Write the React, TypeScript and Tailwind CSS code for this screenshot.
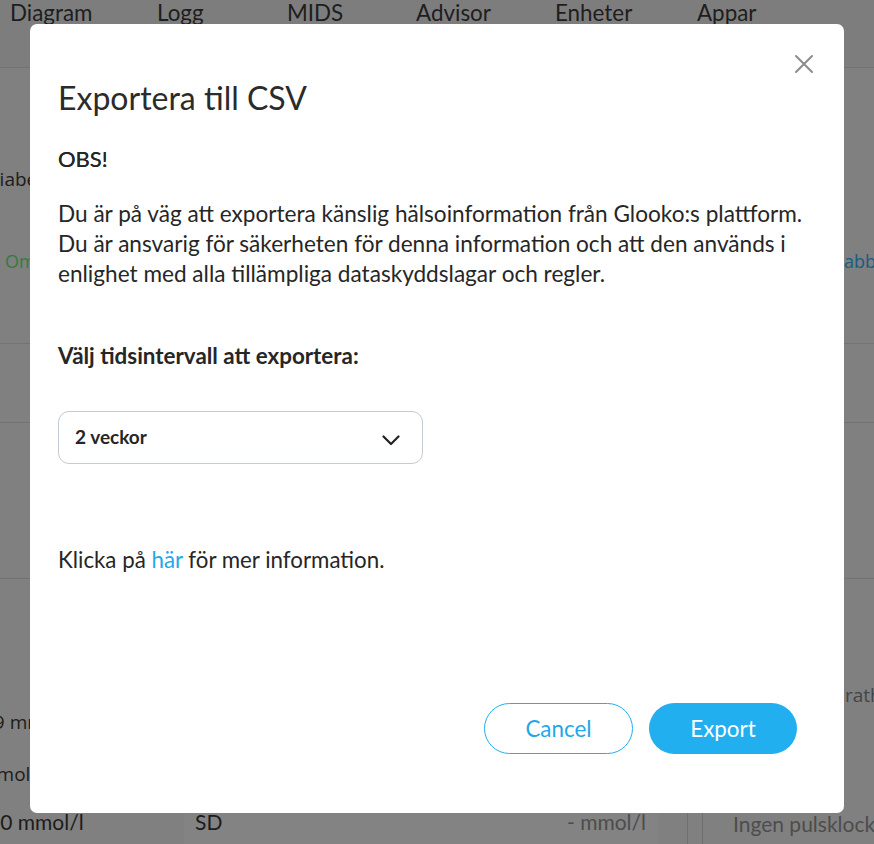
import React from "react";

function Chevron() {
  return (
    <svg width="18" height="11" viewBox="0 0 18 11" fill="none">
      <path d="M1.5 1.5 L9 9 L16.5 1.5" stroke="#222" strokeWidth="2.2" strokeLinecap="round" strokeLinejoin="round" />
    </svg>
  );
}

function CloseIcon() {
  return (
    <svg width="20" height="20" viewBox="0 0 20 20" fill="none">
      <path d="M2 2 L18 18 M18 2 L2 18" stroke="#8c8c8c" strokeWidth="2" strokeLinecap="round" />
    </svg>
  );
}

export default function App() {
  const lato = { fontFamily: "Lato, 'Open Sans', sans-serif" } as React.CSSProperties;
  return (
    <div className="relative w-[874px] h-[844px] overflow-hidden bg-[#808080]" style={{ fontFamily: "'Open Sans', sans-serif" }}>
      {/* background page (dimmed) */}
      <div className="flex flex-col">
        <div className="h-[68px] border-b border-[#737373] bg-[#7d7d7d] flex text-[22.4px] text-[#1e1e1e] leading-none pt-[2px]" style={lato}>
          <div className="w-[157px] pl-[10px]">Diagram</div>
          <div className="w-[130px]">Logg</div>
          <div className="w-[129px]">MIDS</div>
          <div className="w-[139px]">Advisor</div>
          <div className="w-[142px]">Enheter</div>
          <div>Appar</div>
        </div>
        <div className="h-[276px] border-b border-[#737373] flex flex-col">
          <div className="mt-[98px] text-[19px] text-[#1c1c1c] leading-[26px] -ml-[12px]">diabetes</div>
          <div className="mt-[56px] flex justify-between text-[18px] leading-[26px]">
            <span className="pl-[5px] text-[#2f7d3f]">Om</span>
            <span className="text-[#1a5b82] w-[30px] overflow-hidden whitespace-nowrap">abbo</span>
          </div>
        </div>
        <div className="h-[79px] border-b border-[#737373] flex items-center pl-[30px] text-[#2a2a2a] text-[14px]">
          <span className="mt-[6px]">.</span>
        </div>
        <div className="h-[156px] border-b border-[#737373]"></div>
        <div className="h-[265px] flex flex-col text-[19px] text-[#1c1c1c] leading-[26px]">
          <div className="flex justify-end mt-[103px] text-[#454545]">
            <span className="w-[29px] overflow-hidden whitespace-nowrap">rath</span>
          </div>
          <div className="-ml-[17px] mt-[1px]">29 mmol/l</div>
          <div className="-ml-[21px] mt-[26px]">mmol/l</div>
          <div className="flex mt-[21px] items-stretch h-[40px]" style={lato}>
            <div className="w-[196px] shrink-0 -ml-[12px] pt-[1px] text-[21px]">10 mmol/l</div>
            <div className="w-[474px] shrink-0 bg-[#838383] flex justify-between pl-[11px] pr-[12px] pt-[1px] text-[21px]">
              <span className="text-[#1c1c1c]">SD</span>
              <span className="text-[#4d4d4d]">- mmol/l</span>
            </div>
            <div className="w-[16px] shrink-0 border-l border-r border-[#707070] ml-[29px]"></div>
            <div className="pl-[30px] pt-[3px] text-[21px] text-[#4d4d4d] whitespace-nowrap">Ingen pulsklocka</div>
          </div>
        </div>
      </div>

      {/* modal */}
      <div className="absolute left-[30px] top-[24px] w-[814px] h-[789px] bg-white rounded-[7px] pl-[28px] pr-[47px] text-[#262626]" style={lato}>
        <button className="absolute right-[30px] top-[30px] w-[20px] h-[20px] flex items-center justify-center">
          <CloseIcon />
        </button>
        <div className="pt-[55px] text-[32px] leading-[38px] text-[#2b2b2b]">Exportera till CSV</div>
        <div className="mt-[27px] text-[22px] leading-[30px] [text-shadow:0_0_0.4px_#262626]">OBS!</div>
        <div className="mt-[25px] text-[22.6px] leading-[30px] w-[770px] whitespace-nowrap">
          Du är på väg att exportera känslig hälsoinformation från Glooko:s plattform.
          <br />
          Du är ansvarig för säkerheten för denna information och att den används i
          <br />
          enlighet med alla tillämpliga dataskyddslagar och regler.
        </div>
        <div className="mt-[52px] text-[22.4px] leading-[30px] font-bold">Välj tidsintervall att exportera:</div>
        <div className="mt-[40px] w-[365px] h-[53px] border border-[#c3cbd3] rounded-[11px] flex items-center justify-between pl-[16px] pr-[22px]">
          <span className="text-[19px] font-bold text-[#262626]">2 veckor</span>
          <span className="mt-[6px]"><Chevron /></span>
        </div>
        <div className="mt-[81px] text-[22.3px] leading-[30px]">
          Klicka på <span className="text-[#21a9e8]">här</span> för mer information.
        </div>
        <div className="mt-[128px] flex justify-end gap-[16px]">
          <button className="w-[149px] h-[51px] rounded-full border border-[#22aeee] text-[#1fa8e8] text-[22.4px]">Cancel</button>
          <button className="w-[148px] h-[51px] rounded-full bg-[#21aff0] text-white text-[22.4px]">Export</button>
        </div>
      </div>
    </div>
  );
}
